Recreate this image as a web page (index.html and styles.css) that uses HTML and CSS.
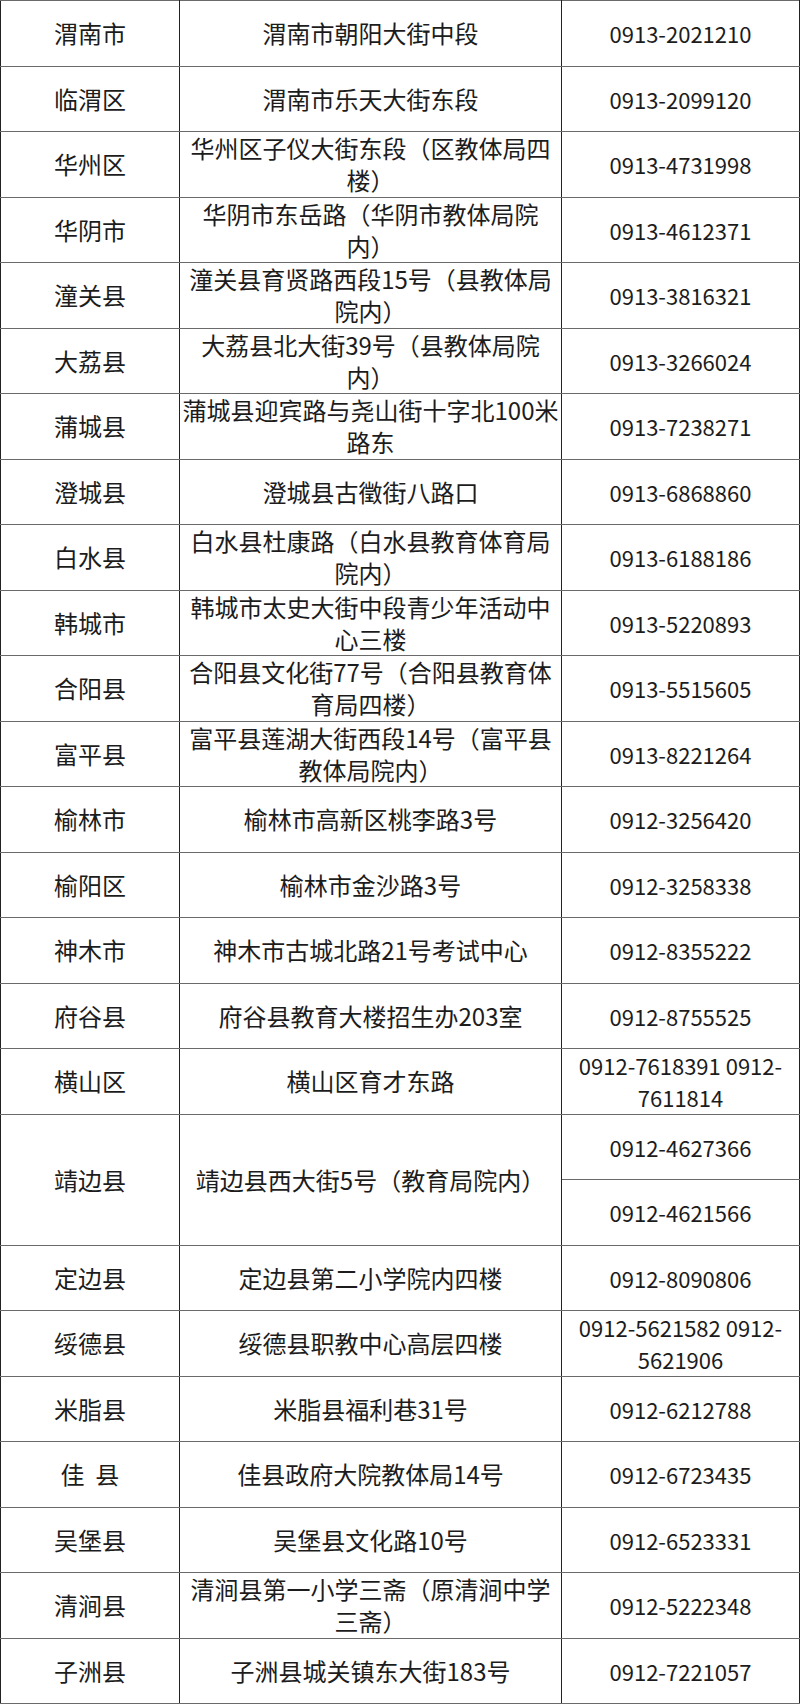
FILE: index.html
```html
<!DOCTYPE html>
<html lang="zh-CN">
<head>
<meta charset="utf-8">
<title>招生办联系方式</title>
<link rel="stylesheet" href="styles.css">
</head>
<body>
<table class="contacts">
  <colgroup>
    <col class="c-name">
    <col class="c-addr">
    <col class="c-phone">
  </colgroup>
  <tbody>
    <tr><td>渭南市</td><td>渭南市朝阳大街中段</td><td class="phone">0913-2021210</td></tr>
    <tr><td>临渭区</td><td>渭南市乐天大街东段</td><td class="phone">0913-2099120</td></tr>
    <tr><td>华州区</td><td>华州区子仪大街东段（区教体局四楼）</td><td class="phone">0913-4731998</td></tr>
    <tr><td>华阴市</td><td>华阴市东岳路（华阴市教体局院内）</td><td class="phone">0913-4612371</td></tr>
    <tr><td>潼关县</td><td>潼关县育贤路西段15号（县教体局院内）</td><td class="phone">0913-3816321</td></tr>
    <tr><td>大荔县</td><td>大荔县北大街39号（县教体局院内）</td><td class="phone">0913-3266024</td></tr>
    <tr><td>蒲城县</td><td>蒲城县迎宾路与尧山街十字北100米路东</td><td class="phone">0913-7238271</td></tr>
    <tr><td>澄城县</td><td>澄城县古徵街八路口</td><td class="phone">0913-6868860</td></tr>
    <tr><td>白水县</td><td>白水县杜康路（白水县教育体育局院内）</td><td class="phone">0913-6188186</td></tr>
    <tr><td>韩城市</td><td>韩城市太史大街中段青少年活动中心三楼</td><td class="phone">0913-5220893</td></tr>
    <tr><td>合阳县</td><td>合阳县文化街77号（合阳县教育体育局四楼）</td><td class="phone">0913-5515605</td></tr>
    <tr><td>富平县</td><td>富平县莲湖大街西段14号（富平县教体局院内）</td><td class="phone">0913-8221264</td></tr>
    <tr><td>榆林市</td><td>榆林市高新区桃李路3号</td><td class="phone">0912-3256420</td></tr>
    <tr><td>榆阳区</td><td>榆林市金沙路3号</td><td class="phone">0912-3258338</td></tr>
    <tr><td>神木市</td><td>神木市古城北路21号考试中心</td><td class="phone">0912-8355222</td></tr>
    <tr><td>府谷县</td><td>府谷县教育大楼招生办203室</td><td class="phone">0912-8755525</td></tr>
    <tr><td>横山区</td><td>横山区育才东路</td><td class="phone">0912-7618391 0912-<br>7611814</td></tr>
    <tr><td rowspan="2">靖边县</td><td rowspan="2">靖边县西大街5号（教育局院内）</td><td class="phone">0912-4627366</td></tr>
    <tr><td class="phone">0912-4621566</td></tr>
    <tr><td>定边县</td><td>定边县第二小学院内四楼</td><td class="phone">0912-8090806</td></tr>
    <tr><td>绥德县</td><td>绥德县职教中心高层四楼</td><td class="phone">0912-5621582 0912-<br>5621906</td></tr>
    <tr><td>米脂县</td><td>米脂县福利巷31号</td><td class="phone">0912-6212788</td></tr>
    <tr><td>佳&nbsp;&nbsp;县</td><td>佳县政府大院教体局14号</td><td class="phone">0912-6723435</td></tr>
    <tr><td>吴堡县</td><td>吴堡县文化路10号</td><td class="phone">0912-6523331</td></tr>
    <tr><td>清涧县</td><td>清涧县第一小学三斋（原清涧中学三斋）</td><td class="phone">0912-5222348</td></tr>
    <tr><td>子洲县</td><td>子洲县城关镇东大街183号</td><td class="phone">0912-7221057</td></tr>
  </tbody>
</table>
</body>
</html>
```

FILE: styles.css
```css
html, body {
  margin: 0;
  padding: 0;
  background: #ffffff;
}

body {
  font-family: "Noto Sans CJK SC", "Noto Sans", sans-serif;
  color: #1c1c1c;
}

.contacts {
  border-collapse: collapse;
  table-layout: fixed;
  width: 799px;
}

.c-name { width: 179px; }
.c-addr { width: 382px; }
.c-phone { width: 238px; }

.contacts td {
  height: 65.5px;
  padding: 0 2px;
  box-sizing: border-box;
  text-align: center;
  vertical-align: middle;
  font-size: 24px;
  line-height: 32px;
  text-spacing-trim: space-all;
  border-top: 1px solid #6a6a6a;
  border-bottom: 1px solid #6a6a6a;
  border-left: 1px solid #222222;
  border-right: 1px solid #222222;
}

.contacts td.phone {
  font-size: 22px;
}
```
